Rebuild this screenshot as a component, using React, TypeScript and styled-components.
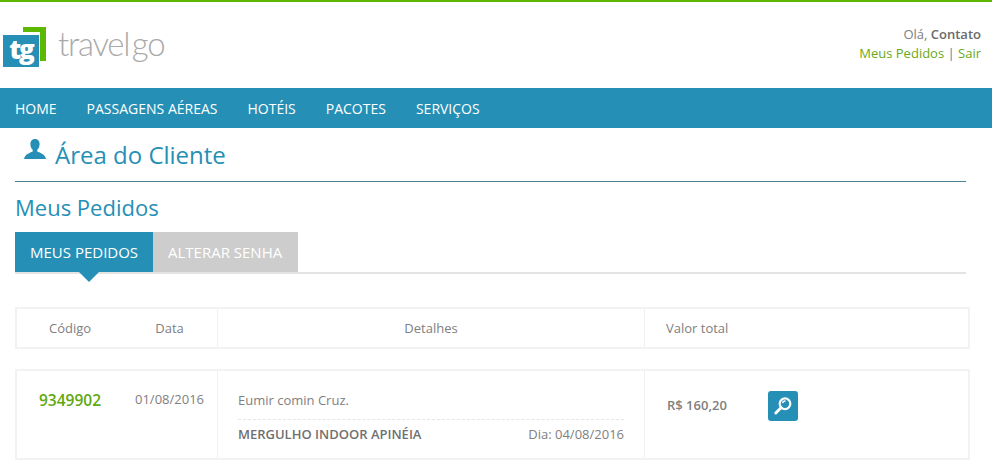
import React from "react";
import styled, { createGlobalStyle } from "styled-components";

const Global = createGlobalStyle`
  html, body { margin: 0; padding: 0; background: #fff; }
  body { font-family: "Open Sans", "Liberation Sans", sans-serif; color: #808080; overflow: hidden; }
`;
const Page = styled.div`
  width: 992px; height: 474px; overflow: hidden; border-top: 2px solid #5cb800; box-sizing: border-box;
`;
const Header = styled.header`
  height: 86px; display: flex; justify-content: space-between; padding: 0 11px 0 3px;
`;
const Brand = styled.div`
  display: flex; align-items: flex-start; padding-top: 25px;
`;
const LogoMark = styled.div`
  position: relative; width: 46px; height: 41px; margin-right: 9px;
`;
const LogoBack = styled.div`
  position: absolute; left: 20px; top: 0; width: 23px; height: 34px;
  border-top: 5px solid #5cb800; border-right: 6px solid #5cb800; box-sizing: border-box;
`;
const LogoFront = styled.div`
  position: absolute; left: 0; top: 7px; width: 37px; height: 33px;
  background: #268fb6; border: 1px solid #fff; border-width: 1px 1px 0 0; box-sizing: border-box;
  color: #fff; font: 800 26px/28px "Open Sans", sans-serif; letter-spacing: -2px; text-align: center;
`;
const LogoName = styled.div`
  font: 300 33px/1 "Lato", sans-serif; color: #aaa; letter-spacing: -1.3px; word-spacing: -5px;
`;
const Account = styled.div`
  padding-top: 23px; text-align: right; font-size: 13px; line-height: 19px;
  b { font-weight: 600; color: #6a6a6a; }
`;
const AccountLinks = styled.div`
  color: #6aa81a;
  i { font-style: normal; color: #268fb6; }
`;
const Nav = styled.nav`
  height: 40px; background: #268fb6; display: flex; gap: 30px; padding-left: 15px; align-items: center;
  color: #fff; font-size: 14px;
`;
const Main = styled.main`
  padding: 0 22px 0 15px;
`;
const TitleRow = styled.div`
  height: 54px; display: flex; align-items: flex-start; color: #268fb6; border-bottom: 1px solid #4a7f96;
  margin-right: 4px; box-sizing: border-box;
  svg { margin: 11px 9px 0 9px; }
`;
const Title = styled.h1`
  margin: 10px 0 0; font-size: 24px; line-height: 34px; font-weight: 400;
`;
const Sub = styled.h2`
  margin: 10px 0 0; color: #268fb6; font-size: 22px; line-height: 30px; font-weight: 400;
`;
const Tabs = styled.div`
  margin: 10px 4px 0 0; display: flex; border-bottom: 2px solid #e3e3e3; height: 42px; box-sizing: border-box;
`;
const Tab = styled.div<{ $active?: boolean }>`
  position: relative; height: 40px; width: ${(p) => (p.$active ? "138px" : "145px")}; padding-left: 15px; box-sizing: border-box;
  display: flex; align-items: center; font-size: 15px; color: #fff;
  background: ${(p) => (p.$active ? "#268fb6" : "#cdcdcd")};
  ${(p) => p.$active && `&::after {
    content: ""; position: absolute; left: 64px; top: 40px; width: 0; height: 0;
    border-left: 10px solid transparent; border-right: 10px solid transparent; border-top: 10px solid #268fb6;
  }`}
`;
const Box = styled.div<{ $h: number; $mt: number }>`
  margin-top: ${(p) => p.$mt}px; height: ${(p) => p.$h}px; width: 955px; box-sizing: border-box;
  border: 2px solid #f2f2f2; display: grid; grid-template-columns: 105px 95px 427px 1fr;
  font-size: 13px;
`;
const Cell = styled.div<{ $line?: boolean; $pad?: string; $center?: boolean }>`
  box-sizing: border-box; padding: ${(p) => p.$pad || "0"};
  ${(p) => p.$center && "text-align: center;"}
  ${(p) => p.$line && "border-left: 1px solid #f0f0f0;"}
`;
const Code = styled.div`
  color: #5fa80f; font-size: 15.5px; font-weight: 600; line-height: 22px;
`;
const Details = styled.div`
  display: flex; flex-direction: column;
`;
const Names = styled.div`
  line-height: 18px; height: 28px; border-bottom: 1px dashed #e6e6e6;
`;
const Bottom = styled.div`
  display: flex; justify-content: space-between; padding-top: 4px; line-height: 20px;
  b { font-weight: 600; color: #707070; }
`;
const Total = styled.div`
  display: flex; align-items: flex-start;
  b { font-weight: 600; line-height: 18px; margin-top: 5px; width: 101px; }
`;
const ViewButton = styled.div`
  width: 30px; height: 30px; border-radius: 3px; background: #268fb6; display: flex; align-items: center; justify-content: center;
`;

export default function App() {
  return (
    <Page>
      <Global />
      <Header>
        <Brand>
          <LogoMark>
            <LogoBack />
            <LogoFront>tg</LogoFront>
          </LogoMark>
          <LogoName>travel go</LogoName>
        </Brand>
        <Account>
          <div>Olá, <b>Contato</b></div>
          <AccountLinks>Meus Pedidos <i>|</i> Sair</AccountLinks>
        </Account>
      </Header>
      <Nav>
        <span>HOME</span>
        <span>PASSAGENS AÉREAS</span>
        <span>HOTÉIS</span>
        <span>PACOTES</span>
        <span>SERVIÇOS</span>
      </Nav>
      <Main>
        <TitleRow>
          <svg width="22" height="22" viewBox="0 0 22 22" fill="#268fb6">
            <path d="M11 0c3 0 4.600 2.200 4.600 5.200 0 2.200-.9 4.300-2.300 5.500v1.900c1.800 1 7.700 2.300 8.700 7.400H0c1-5.100 6.900-6.400 8.700-7.400v-1.900C7.300 9.500 6.400 7.400 6.400 5.200 6.400 2.200 8 0 11 0z" />
          </svg>
          <Title>Área do Cliente</Title>
        </TitleRow>
        <Sub>Meus Pedidos</Sub>
        <Tabs>
          <Tab $active>MEUS PEDIDOS</Tab>
          <Tab>ALTERAR SENHA</Tab>
        </Tabs>
        <Box $h={42} $mt={33}>
          <Cell $center $pad="10px 0 0 1px">Código</Cell>
          <Cell $center $pad="10px 0 0 0">Data</Cell>
          <Cell $line $center $pad="10px 0 0 0">Detalhes</Cell>
          <Cell $line $pad="10px 0 0 21px">Valor total</Cell>
        </Box>
        <Box $h={91} $mt={20}>
          <Cell $center $pad="18px 0 0 1px"><Code>9349902</Code></Cell>
          <Cell $center $pad="19px 0 0 0">01/08/2016</Cell>
          <Cell $line $pad="20px 20px 0 20px">
            <Details>
              <Names>Eumir comin Cruz.</Names>
              <Bottom><b>MERGULHO INDOOR APINÉIA</b><span>Dia: 04/08/2016</span></Bottom>
            </Details>
          </Cell>
          <Cell $line $pad="20px 0 0 22px">
            <Total>
              <b>R$ 160,20</b>
              <ViewButton>
                <svg width="20" height="20" viewBox="0 0 18 18" fill="none">
                  <circle cx="10.800" cy="7" r="4.800" stroke="#fff" strokeWidth="2" />
                  <path d="M7.200 10.600 2.500 15.300" stroke="#fff" strokeWidth="2.600" strokeLinecap="round" />
                  <path d="M8.500 6.500a2.600 2.600 0 0 1 2.800-2" stroke="#fff" strokeWidth="1.200" />
                </svg>
              </ViewButton>
            </Total>
          </Cell>
        </Box>
      </Main>
    </Page>
  );
}
